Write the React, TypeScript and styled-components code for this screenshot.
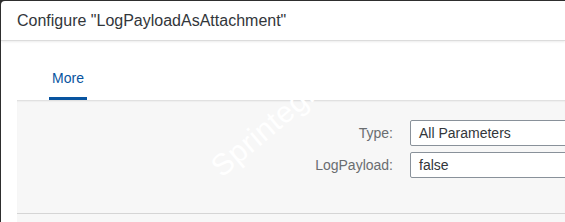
import React from 'react'
import styled, { createGlobalStyle } from 'styled-components'

const GlobalStyle = createGlobalStyle`
	html, body {
		margin: 0;
		padding: 0;
		height: 100%;
		overflow: hidden;
		background: #2e2e2e;
	}

	body {
		font-family: 'Liberation Sans', Arial, sans-serif;
		color: #32363a;
	}
`

const Dialog = styled.div`
	display: flex;
	flex-direction: column;
	margin: 1px 0 0 1px;
	height: 221px;
	background: #ffffff;
	border-top-left-radius: 4px;
	overflow: hidden;
`

const Header = styled.header`
	display: flex;
	align-items: center;
	flex: 0 0 39px;
	padding-left: 16px;
	border-bottom: 1px solid #dcdcdc;
	box-shadow: 0 1px 2px rgba(0, 0, 0, 0.08);
	position: relative;
	z-index: 2;
`

const Title = styled.h1`
	margin: 0;
	font-size: 16px;
	font-weight: normal;
	color: #32363a;
	white-space: nowrap;
`

const Body = styled.div`
	display: flex;
	flex-direction: column;
	flex: 1 1 auto;
	padding-left: 16px;
`

const TabBar = styled.nav`
	display: flex;
	align-items: flex-end;
	height: 59px;
	padding-left: 32px;
	background: #ffffff;
`

const Tab = styled.div<{ active?: boolean }>`
	display: flex;
	align-items: center;
	justify-content: center;
	width: 38px;
	height: 41px;
	box-sizing: border-box;
	font-size: 14px;
	color: ${({ active }) => (active ? '#0854a0' : '#32363a')};
	border-bottom: 3px solid ${({ active }) => (active ? '#0854a0' : 'transparent')};
`

const Content = styled.section`
	position: relative;
	flex: 0 0 114px;
	box-sizing: border-box;
	padding-top: 20px;
	background: #f7f7f7;
	border-bottom: 1px solid #d5d5d5;
	box-shadow: inset 0 2px 2px -1px rgba(0, 0, 0, 0.12);
	overflow: hidden;
`

const Footer = styled.div`
	flex: 1 1 auto;
	background: #f7f7f7;
`

const Form = styled.div`
	display: grid;
	grid-template-columns: 376px 300px;
	column-gap: 17px;
	row-gap: 6px;
	align-items: center;
	position: relative;
	z-index: 1;
`

const Label = styled.label`
	text-align: right;
	font-size: 14px;
	color: #6a6d70;
	white-space: nowrap;
`

const Field = styled.div`
	display: flex;
	align-items: center;
	height: 26px;
	box-sizing: border-box;
	padding-left: 8px;
	background: #ffffff;
	border: 1px solid #89919a;
	border-radius: 2px;
	font-size: 14px;
	color: #32363a;
`

const Watermark = styled.div`
	position: absolute;
	left: 208px;
	top: 52px;
	font-size: 30px;
	line-height: 30px;
	color: #ffffff;
	transform: rotate(-40deg);
	transform-origin: left bottom;
	white-space: nowrap;
	pointer-events: none;
	z-index: 0;
	letter-spacing: 0.5px;
`

const fields = [
	{ label: 'Type:', value: 'All Parameters' },
	{ label: 'LogPayload:', value: 'false' },
]

export default function App() {
	return (
		<>
			<GlobalStyle />
			<Dialog>
				<Header>
					<Title>Configure "LogPayloadAsAttachment"</Title>
				</Header>
				<Body>
					<TabBar>
						<Tab active>More</Tab>
					</TabBar>
					<Content>
						<Watermark>Sprintegra</Watermark>
						<Form>
							{fields.map(({ label, value }) => (
								<React.Fragment key={label}>
									<Label>{label}</Label>
									<Field>{value}</Field>
								</React.Fragment>
							))}
						</Form>
					</Content>
					<Footer />
				</Body>
			</Dialog>
		</>
	)
}
